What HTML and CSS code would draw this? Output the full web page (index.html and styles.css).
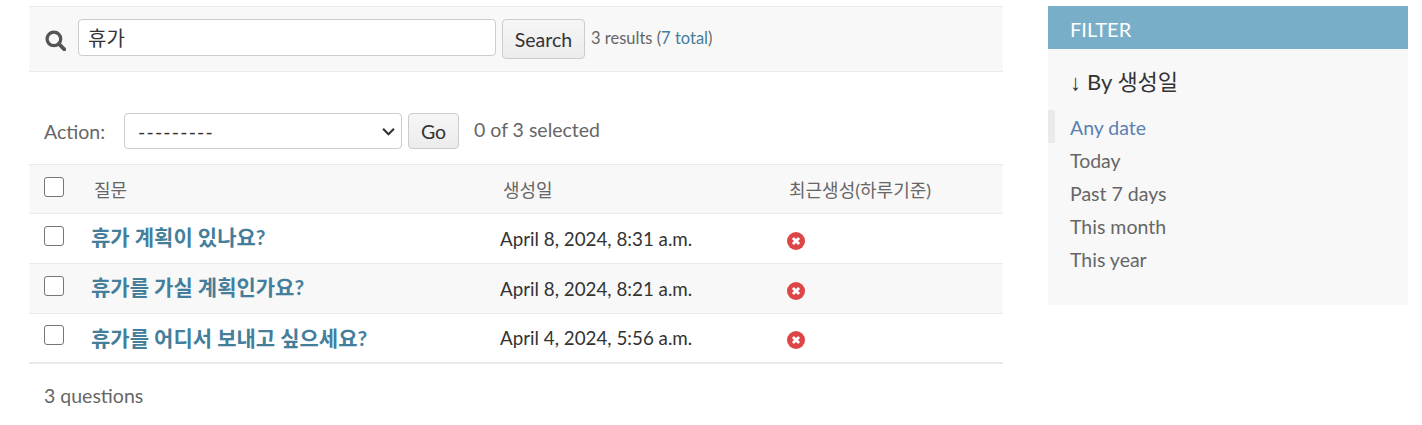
FILE: index.html
```html
<!DOCTYPE html>
<html lang="ko">
<head>
    <meta charset="UTF-8">
    <meta name="viewport" content="width=device-width, initial-scale=1.0">
    <title>Questions</title>
    <link rel="stylesheet" href="styles.css">
</head>
<body>
    <div class="page">
        <div class="changelist">
            <!-- Search -->
            <form class="toolbar">
                <svg class="search-icon" viewBox="0 0 20 20" width="22" height="22" aria-hidden="true">
                    <circle cx="9" cy="9" r="6.2" fill="none" stroke="#555" stroke-width="3"></circle>
                    <path d="M13.5 13.5 L18.5 18.5" stroke="#555" stroke-width="3.4" stroke-linecap="round"></path>
                </svg>
                <input class="search-input" type="text" value="휴가">
                <button class="btn btn-search" type="button">Search</button>
                <span class="quiet">3 results (<a href="#">7 total</a>)</span>
            </form>

            <!-- Actions -->
            <div class="actions">
                <label class="action-label">Action:</label>
                <div class="select">
                    <span class="select-value">---------</span>
                    <svg viewBox="0 0 12 8" width="13" height="9" aria-hidden="true">
                        <path d="M1 1.5 L6 6.5 L11 1.5" fill="none" stroke="#333" stroke-width="2"></path>
                    </svg>
                </div>
                <button class="btn btn-go" type="button">Go</button>
                <span class="selected">0 of 3 selected</span>
            </div>

            <table class="results">
                <thead>
                    <tr>
                        <th class="col-check"><span class="check"></span></th>
                        <th class="col-q">질문</th>
                        <th class="col-date">생성일</th>
                        <th class="col-recent">최근생성(하루기준)</th>
                    </tr>
                </thead>
                <tbody>
                    <tr>
                        <td class="col-check"><span class="check"></span></td>
                        <td class="col-q"><a href="#">휴가 계획이 있나요?</a></td>
                        <td class="col-date">April 8, 2024, 8:31 a.m.</td>
                        <td class="col-recent">
                            <svg class="icon-no" viewBox="0 0 18 18" width="18" height="18"><circle cx="9" cy="9" r="9" fill="#dd4646"></circle><path d="M5.9 5.9 L12.1 12.1 M12.1 5.9 L5.9 12.1" stroke="#fff" stroke-width="2.8"></path></svg>
                        </td>
                    </tr>
                    <tr class="alt">
                        <td class="col-check"><span class="check"></span></td>
                        <td class="col-q"><a href="#">휴가를 가실 계획인가요?</a></td>
                        <td class="col-date">April 8, 2024, 8:21 a.m.</td>
                        <td class="col-recent">
                            <svg class="icon-no" viewBox="0 0 18 18" width="18" height="18"><circle cx="9" cy="9" r="9" fill="#dd4646"></circle><path d="M5.9 5.9 L12.1 12.1 M12.1 5.9 L5.9 12.1" stroke="#fff" stroke-width="2.8"></path></svg>
                        </td>
                    </tr>
                    <tr>
                        <td class="col-check"><span class="check"></span></td>
                        <td class="col-q"><a href="#">휴가를 어디서 보내고 싶으세요?</a></td>
                        <td class="col-date">April 4, 2024, 5:56 a.m.</td>
                        <td class="col-recent">
                            <svg class="icon-no" viewBox="0 0 18 18" width="18" height="18"><circle cx="9" cy="9" r="9" fill="#dd4646"></circle><path d="M5.9 5.9 L12.1 12.1 M12.1 5.9 L5.9 12.1" stroke="#fff" stroke-width="2.8"></path></svg>
                        </td>
                    </tr>
                </tbody>
            </table>
            <p class="paginator">3 questions</p>
        </div>

        <!-- Filter -->
        <div class="filter">
            <h2 class="filter-title">FILTER</h2>
            <h3 class="filter-by"><span class="arrow">↓</span>By 생성일</h3>
            <ul class="filter-list">
                <li class="current"><a href="#">Any date</a></li>
                <li><a href="#">Today</a></li>
                <li><a href="#">Past 7 days</a></li>
                <li><a href="#">This month</a></li>
                <li><a href="#">This year</a></li>
            </ul>
        </div>
    </div>
</body>
</html>
```

FILE: styles.css
```css
body {
    margin: 0;
    background-color: #fff;
    color: #333;
    font-family: Lato, "Noto Sans CJK KR", sans-serif;
    font-size: 19.5px;
}
.page {
    display: flex;
    align-items: flex-start;
    gap: 45px;
    padding: 6px 14px 0 29px;
}
.changelist {
    width: 974px;
    flex: none;
}
.toolbar {
    display: flex;
    align-items: center;
    background-color: #f8f8f8;
    border-top: 1px solid #eaeaea;
    border-bottom: 1px solid #eaeaea;
    height: 64px;
    padding-left: 15px;
}
.search-icon {
    margin-right: 12px;
    margin-top: 1px;
}
.search-input {
    width: 418px;
    height: 37px;
    box-sizing: border-box;
    margin-top: -4px;
    padding: 0 9px;
    border: 1px solid #ccc;
    border-radius: 4px;
    font-family: inherit;
    font-size: 20px;
    color: #333;
}
.btn {
    height: 40px;
    box-sizing: border-box;
    border: 1px solid #ccc;
    border-radius: 4px;
    background: linear-gradient(#f6f6f6, #ececec);
    color: #333;
    font-family: inherit;
    font-size: 19.5px;
    padding: 0;
}
.btn-search {
    width: 83px;
    margin-left: 6px;
}
.quiet {
    margin-left: 6px;
    margin-top: -3px;
    font-size: 16.5px;
    color: #666;
}
.quiet a {
    color: #447e9b;
    text-decoration: none;
}
.actions {
    display: flex;
    align-items: center;
    height: 36px;
    margin-top: 41px;
    margin-bottom: 15px;
    padding-left: 15px;
    color: #666;
}
.action-label {
    width: 80px;
}
.select {
    display: flex;
    align-items: center;
    justify-content: space-between;
    width: 278px;
    height: 36px;
    box-sizing: border-box;
    padding: 0 6px 0 13px;
    border: 1px solid #ccc;
    border-radius: 4px;
    background-color: #fff;
    color: #333;
}
.select-value {
    letter-spacing: 1.2px;
}
.btn-go {
    width: 51px;
    height: 36px;
    margin-left: 6px;
}
.selected {
    margin-left: 15px;
    margin-top: -3px;
}
.results {
    width: 100%;
    border-collapse: collapse;
    table-layout: fixed;
}
.results th {
    height: 48px;
    padding: 0;
    text-align: left;
    font-size: 18px;
    font-weight: 400;
    color: #666;
    background-color: #f8f8f8;
    border-top: 1px solid #eaeaea;
    border-bottom: 1px solid #eaeaea;
}
.results tbody tr {
    height: 50px;
}
.results tbody tr:last-child {
    height: 49px;
}
.results td {
    padding: 0;
    border-bottom: 1px solid #eaeaea;
}
.results tbody tr:last-child td {
    border-bottom-width: 2px;
}
.results tr.alt td {
    background-color: #f8f8f8;
}
.col-check {
    width: 62px;
}
.col-check .check {
    display: block;
    width: 18px;
    height: 18px;
    margin-left: 15px;
    margin-top: -5px;
    border: 1px solid #767676;
    border-radius: 3px;
    background-color: #fff;
}
th.col-q {
    width: 406px;
    padding-left: 3px;
}
td.col-q {
    padding-bottom: 5px;
}
.results tbody tr:last-child td.col-q {
    padding-bottom: 2px;
}
.col-q a {
    color: #447e9b;
    font-size: 21px;
    font-weight: 700;
    text-decoration: none;
}
th.col-date {
    width: 284px;
    padding-left: 3px;
}
td.col-date {
    font-size: 18.8px;
}
.icon-no {
    display: block;
    margin-top: 4px;
}
th.col-recent {
    padding-left: 2px;
}
.paginator {
    margin: 20px 0 0 15px;
    color: #666;
}
.filter {
    width: 360px;
    height: 299px;
    flex: none;
    background-color: #f8f8f8;
}
.filter-title {
    margin: 0;
    height: 43px;
    line-height: 47px;
    padding-left: 22px;
    background-color: #79aec8;
    color: #fff;
    font-size: 20px;
    font-weight: 400;
}
.filter-by {
    margin: 15px 0 0 22px;
    font-size: 22px;
    font-weight: 400;
    color: #333;
}
.arrow {
    display: inline-block;
    width: 17px;
    font-family: "Liberation Sans", sans-serif;
    font-size: 22px;
    line-height: 1;
}
.filter-list {
    list-style: none;
    margin: 14px 0 0;
    padding: 0;
}
.filter-list li {
    height: 33px;
    line-height: 35px;
    padding-left: 22px;
}
.filter-list li.current {
    padding-left: 15px;
    border-left: 7px solid #eaeaea;
}
.filter-list li a {
    color: #666;
    text-decoration: none;
}
.filter-list li.current a {
    color: #5b80b2;
}
```
